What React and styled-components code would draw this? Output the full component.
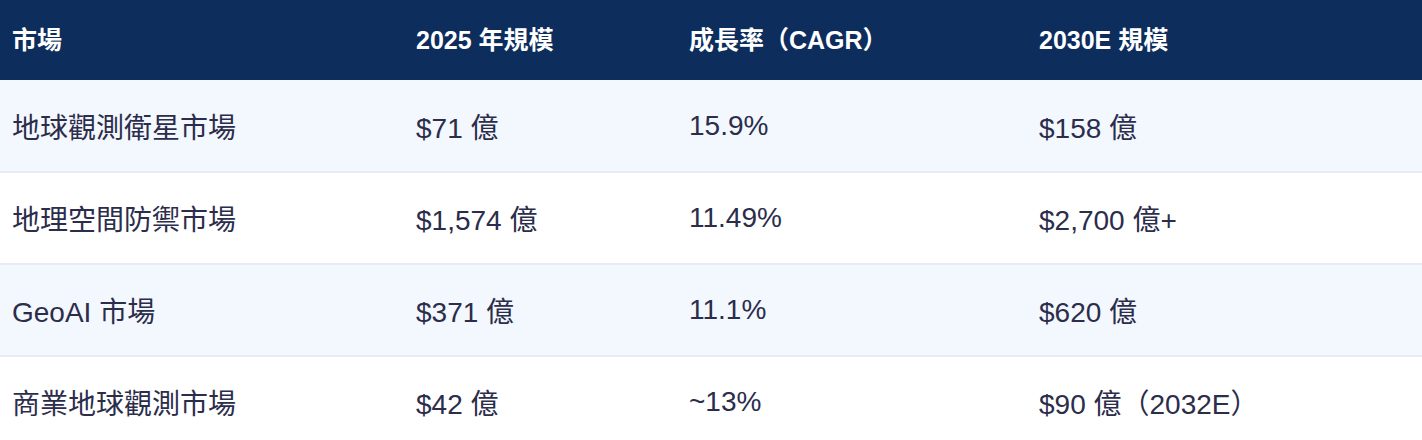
import React from 'react'
import styled, { createGlobalStyle } from 'styled-components'

const GlobalStyle = createGlobalStyle`
  body {
    margin: 0;
    background: #ffffff;
    font-family: "Liberation Sans", "Noto Sans CJK TC", sans-serif;
  }
`

const rows = [
  ['地球觀測衛星市場', '$71 億', '15.9%', '$158 億'],
  ['地理空間防禦市場', '$1,574 億', '11.49%', '$2,700 億+'],
  ['GeoAI 市場', '$371 億', '11.1%', '$620 億'],
  ['商業地球觀測市場', '$42 億', '~13%', '$90 億（2032E）'],
]

const headers = ['市場', '2025 年規模', '成長率（CAGR）', '2030E 規模']
const widths = [404, 273, 350, 395]

function App() {
  return (
    <>
      <GlobalStyle />
      <Table>
        <colgroup>
          {widths.map((w, i) => (
            <col key={i} style={{ width: w }} />
          ))}
        </colgroup>
        <thead>
          <tr>
            {headers.map((h) => (
              <HeadCell key={h}>{h}</HeadCell>
            ))}
          </tr>
        </thead>
        <tbody>
          {rows.map((r, i) => (
            <Row key={i} $alt={i % 2 === 0}>
              {r.map((c, j) => (
                <Cell key={j}>{c}</Cell>
              ))}
            </Row>
          ))}
        </tbody>
      </Table>
    </>
  )
}

export default App

const Table = styled.table`
  width: 1422px;
  table-layout: fixed;
  border-collapse: collapse;
  border-spacing: 0;
`

const HeadCell = styled.th`
  height: 80px;
  padding: 0 12px 5px;
  background: #0d2d5d;
  color: #ffffff;
  font-size: 25px;
  font-weight: 700;
  text-align: left;
  vertical-align: middle;
  box-sizing: border-box;
`

const Row = styled.tr`
  background: ${(p) => (p.$alt ? '#f3f7fe' : '#ffffff')};
  border-bottom: 2px solid #e6ecf5;
`

const Cell = styled.td`
  height: 92px;
  padding: 0 12px;
  color: #2b2d4b;
  font-size: 28px;
  vertical-align: middle;
  white-space: nowrap;
  box-sizing: border-box;
`
